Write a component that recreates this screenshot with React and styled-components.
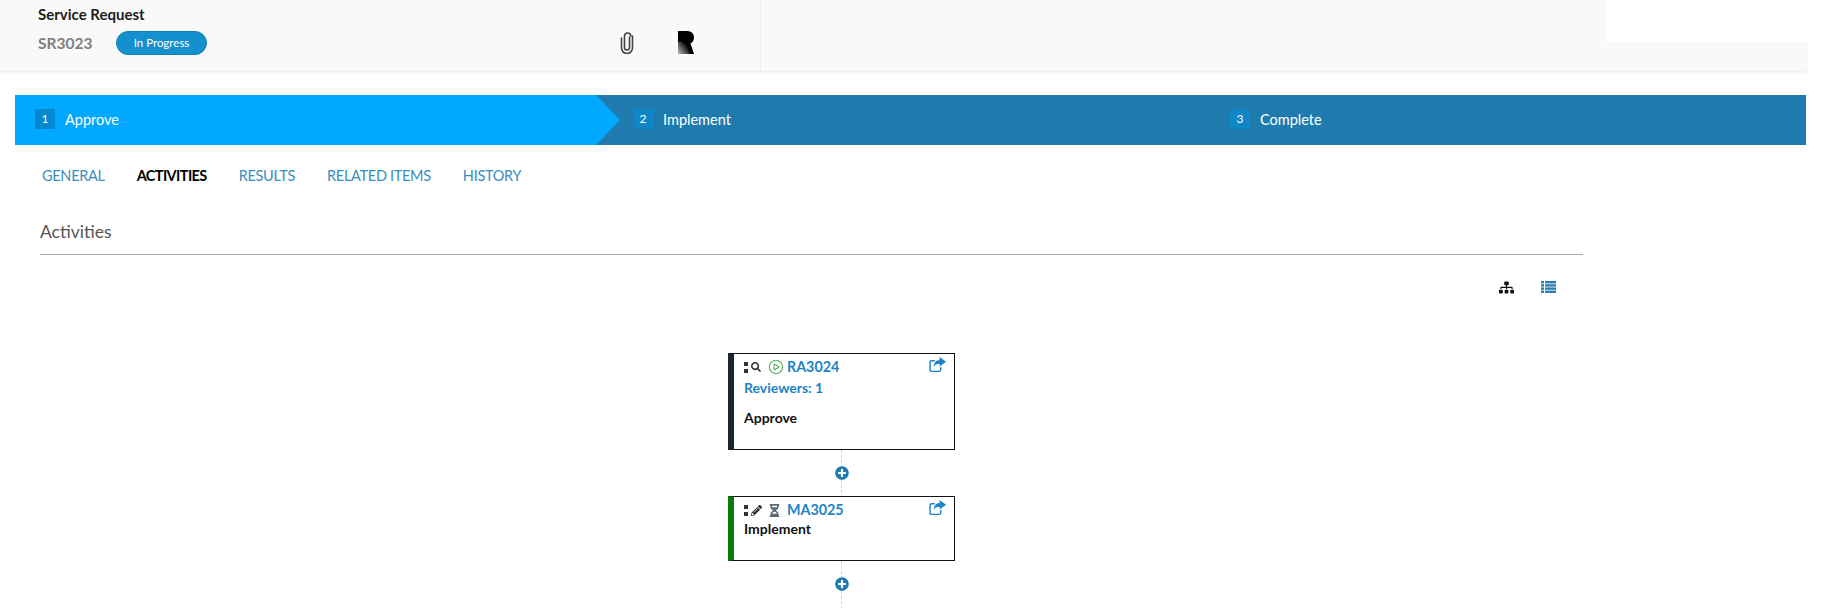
import React from 'react';
import styled, { createGlobalStyle } from 'styled-components';
import { FaSitemap, FaSearch, FaPencilAlt, FaHourglassHalf, FaPlusCircle } from 'react-icons/fa';
import { CirclePlay } from 'lucide-react';

const blue = '#1f7bad';
const link = '#1c84c6';

const Global = createGlobalStyle`
  html, body {
    margin: 0;
    padding: 0;
    height: 610px;
    overflow: hidden;
    background: #fff;
    font-family: Lato, "Open Sans", sans-serif;
  }
`;

const Page = styled.div`
  width: 1824px;
  height: 610px;
  overflow: hidden;
`;

const Header = styled.header`
  position: relative;
  width: 1806px;
  height: 71px;
  background: #f9f9f9;
  box-shadow: 0 1px 3px rgba(0, 0, 0, 0.1);
  display: flex;
`;

const HeaderMain = styled.div`
  width: 761px;
  height: 71px;
  box-sizing: border-box;
  padding: 6px 0 0 38px;
  border-right: 1px solid #efefef;
  display: flex;
  flex-direction: column;
  gap: 8px;
`;

const WhitePatch = styled.div`
  position: absolute;
  top: 0;
  left: 1606px;
  width: 218px;
  height: 42px;
  background: #fff;
`;

const Title = styled.div`
  font-size: 15px;
  font-weight: 700;
  line-height: 17px;
  color: #1c1c1c;
`;

const MetaRow = styled.div`
  display: flex;
  align-items: center;
`;

const Code = styled.span`
  width: 78px;
  font-size: 15.5px;
  font-weight: 700;
  color: #808080;
`;

const Badge = styled.span`
  width: 91px;
  height: 24px;
  box-sizing: border-box;
  border: 1px solid #127fb5;
  border-radius: 12px;
  background: #1490cf;
  color: #fff;
  font-size: 11.5px;
  line-height: 22px;
  text-align: center;
`;

const HeaderIcons = styled.div`
  display: flex;
  align-items: center;
  gap: 43px;
  margin-left: 413px;
`;

const Stepper = styled.nav`
  position: relative;
  margin: 24px 0 0 15px;
  width: 1791px;
  height: 50px;
  background: ${blue};
  display: flex;
  color: #fff;
  font-size: 14.5px;
`;

const Step = styled.div`
  display: flex;
  align-items: center;
  gap: 10px;
  box-sizing: border-box;
  width: ${p => p.$width}px;
  padding: 0 0 2px ${p => p.$indent}px;
  background: ${p => (p.$active ? '#00a8ff' : 'transparent')};
  clip-path: ${p => (p.$active ? 'polygon(0 0, 581px 0, 605px 50%, 581px 100%, 0 100%)' : 'none')};
`;

const StepNum = styled.span`
  width: 20px;
  height: 20px;
  background: ${p => (p.$active ? '#0788ce' : '#0f86c6')};
  font-size: 12px;
  line-height: 20px;
  text-align: center;
`;

const Tabs = styled.div`
  display: flex;
  gap: 32px;
  padding: 22px 0 0 42px;
  height: 18px;
  font-size: 14.5px;
  line-height: 18px;
`;

const Tab = styled.span`
  color: ${p => (p.$active ? '#000' : '#3a8dbd')};
  font-weight: ${p => (p.$active ? 700 : 400)};
  letter-spacing: ${p => (p.$active ? '-0.6px' : '-0.3px')};
`;

const Section = styled.div`
  margin: 36px 0 0 40px;
  width: 1543px;
  padding-bottom: 12px;
  border-bottom: 1px solid #a9b0b5;
  font-size: 17.5px;
  line-height: 21px;
  color: #555;
`;

const ViewBar = styled.div`
  display: flex;
  justify-content: flex-end;
  align-items: center;
  gap: 27px;
  width: 1556px;
  padding-top: 25px;
  height: 14px;
  font-size: 15px;
`;

const Tree = styled.div`
  margin: 59px 0 0 728px;
  width: 227px;
  display: flex;
  flex-direction: column;
  align-items: center;
`;

const Card = styled.div`
  width: 227px;
  height: ${p => p.$height}px;
  box-sizing: border-box;
  border: 1px solid #111;
  border-left: 6px solid ${p => p.$accent};
  padding: 3px 8px 0 10px;
  background: #fff;
  font-size: 14px;
  font-weight: 700;
  line-height: 20px;
`;

const CardTop = styled.div`
  display: flex;
  align-items: center;
  height: 20px;
`;

const Handle = styled.span`
  display: inline-grid;
  grid-template-columns: 4px;
  grid-auto-rows: 4px;
  row-gap: 3px;
  margin-right: 3px;
`;

const Dot = styled.i`
  background: #333;
`;

const TypeIcon = styled.span`
  display: inline-flex;
  width: ${p => p.$width || 17}px;
  color: ${p => p.$color || '#333'};
  font-size: ${p => p.$size || 10}px;
`;

const CardId = styled.span`
  color: ${link};
  font-size: 14.3px;
  margin-left: 2px;
`;

const Share = styled.span`
  margin: -4px 0 0 auto;
  display: inline-flex;
`;

const Reviewers = styled.div`
  color: ${link};
  margin-top: 1px;
`;

const CardName = styled.div`
  color: #111;
  margin-top: ${p => p.$gap || 0}px;
`;

const Link = styled.div`
  width: 15px;
  height: 46px;
  display: flex;
  align-items: center;
  justify-content: center;
  color: ${blue};
  font-size: 14px;
  background: repeating-linear-gradient(#cfd4d8 0 3px, transparent 3px 5px) center / 1px 100% no-repeat;
`;

const PlusWrap = styled.span`
  display: inline-flex;
  background: #fff;
  border-radius: 50%;
`;

const Clip = () => (
  <svg width="14" height="22" viewBox="0 0 14 22" fill="none" stroke="#444" strokeWidth="1.6" strokeLinecap="round">
    <path d="M9.500 5v10.500a2.500 2.500 0 0 1-5 0V4.200a3.200 3.200 0 0 1 6.400 0" />
    <path d="M1.500 6v10a5.500 5.500 0 0 0 11 0V4" />
  </svg>
);

const Logo = () => (
  <svg width="18" height="24" viewBox="0 0 18 24">
    <defs>
      <linearGradient id="logoFade" x1="0.9" y1="0.4" x2="0.1" y2="1">
        <stop offset="0" stopColor="#000" />
        <stop offset="1" stopColor="#b0b0b0" />
      </linearGradient>
    </defs>
    <path d="M1 0h9c5 0 7 3 7 6.500 0 3-1.500 5-3.500 6L17 23h-5L8 13H6v10H1z" fill="#000" />
    <path d="M1 11c6-1 10 3 11.500 12H1z" fill="url(#logoFade)" />
  </svg>
);

const ShareIcon = () => (
  <svg width="17" height="16" viewBox="0 0 16 15">
    <path d="M11 9.500V12a1.500 1.500 0 0 1-1.500 1.500h-7A1.500 1.500 0 0 1 1 12V5a1.500 1.500 0 0 1 1.500-1.500h3" fill="none" stroke={link} strokeWidth="1.400" />
    <path d="M10 0l6 4.500L10 9V6.300C7 6.300 5.500 7 4.500 9.500 4.500 5.500 6.500 3 10 2.800z" fill={link} />
  </svg>
);

const ListIcon = () => (
  <svg width="15" height="12" viewBox="0 0 15 12" fill="#2a7db5">
    <rect x="0" y="0" width="3" height="2.400" />
    <rect x="4" y="0" width="11" height="2.400" />
    <rect x="0" y="3.200" width="3" height="2.400" />
    <rect x="4" y="3.200" width="11" height="2.400" />
    <rect x="0" y="6.400" width="3" height="2.400" />
    <rect x="4" y="6.400" width="11" height="2.400" />
    <rect x="0" y="9.600" width="3" height="2.400" />
    <rect x="4" y="9.600" width="11" height="2.400" />
  </svg>
);

function App() {
  return (
    <Page>
      <Global />
      <Header>
        <HeaderMain>
          <Title>Service Request</Title>
          <MetaRow>
            <Code>SR3023</Code>
            <Badge>In Progress</Badge>
            <HeaderIcons>
              <Clip />
              <Logo />
            </HeaderIcons>
          </MetaRow>
        </HeaderMain>
        <WhitePatch />
      </Header>

      <Stepper>
        <Step $active $width={605} $indent={20}>
          <StepNum $active>1</StepNum>Approve
        </Step>
        <Step $width={595} $indent={13}>
          <StepNum>2</StepNum>Implement
        </Step>
        <Step $indent={15}>
          <StepNum>3</StepNum>Complete
        </Step>
      </Stepper>

      <Tabs>
        <Tab>GENERAL</Tab>
        <Tab $active>ACTIVITIES</Tab>
        <Tab>RESULTS</Tab>
        <Tab>RELATED ITEMS</Tab>
        <Tab>HISTORY</Tab>
      </Tabs>

      <Section>Activities</Section>

      <ViewBar>
        <FaSitemap color="#111" />
        <ListIcon />
      </ViewBar>

      <Tree>
        <Card $accent="#1a2530" $height={97}>
          <CardTop>
            <Handle><Dot /><Dot /></Handle>
            <TypeIcon><FaSearch /></TypeIcon>
            <TypeIcon $color="#4caf50"><CirclePlay size={16} strokeWidth={1.6} /></TypeIcon>
            <CardId>RA3024</CardId>
            <Share><ShareIcon /></Share>
          </CardTop>
          <Reviewers>Reviewers: 1</Reviewers>
          <CardName $gap={10}>Approve</CardName>
        </Card>
        <Link><PlusWrap><FaPlusCircle /></PlusWrap></Link>
        <Card $accent="#0a7a0a" $height={65}>
          <CardTop>
            <Handle><Dot /><Dot /></Handle>
            <TypeIcon $size={11}><FaPencilAlt /></TypeIcon>
            <TypeIcon $color="#5b6b75" $size={13}><FaHourglassHalf /></TypeIcon>
            <CardId>MA3025</CardId>
            <Share><ShareIcon /></Share>
          </CardTop>
          <CardName $gap={-1}>Implement</CardName>
        </Card>
        <Link><PlusWrap><FaPlusCircle /></PlusWrap></Link>
      </Tree>
    </Page>
  );
}

export default App;
